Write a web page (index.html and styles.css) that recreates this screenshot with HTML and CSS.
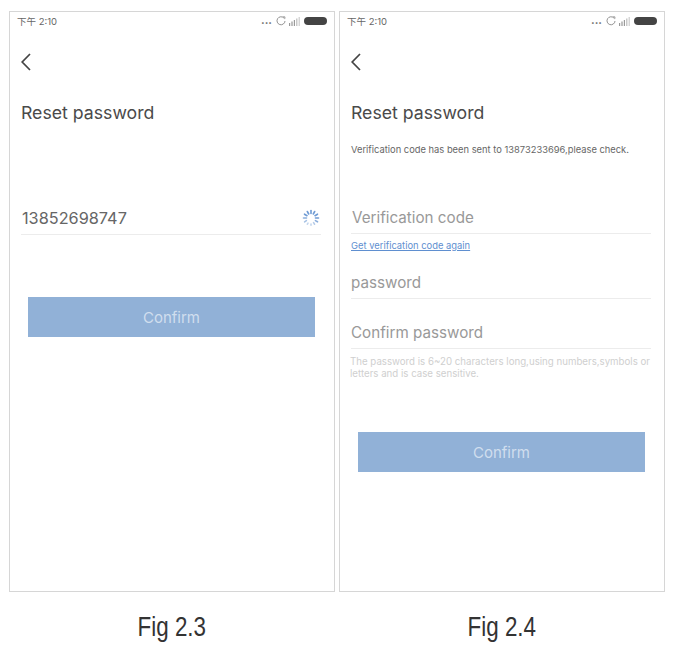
FILE: index.html
```html
<!DOCTYPE html>
<html lang="en">
<head>
<meta charset="utf-8">
<title>Reset password</title>
<link rel="stylesheet" href="styles.css">
</head>
<body>
<main class="figures">
  <figure class="figure">
    <section class="phone">
      <header class="status">
        <span class="time">下午 2:10</span>
        <span class="status-icons">
          <span class="dots">...</span>
          <svg class="sync" viewBox="0 0 10 10"><path d="M7.9 2A4 4 0 1 0 9 5" fill="none" stroke="#777" stroke-width="0.8"/><path d="M6.8 0.8 9 0.9 8.7 3.1" fill="none" stroke="#777" stroke-width="0.7"/></svg>
          <svg class="signal" viewBox="0 0 11 9"><g fill="#999"><rect x="0" y="6" width="1.2" height="3"/><rect x="2.4" y="4.5" width="1.2" height="4.5"/><rect x="4.8" y="3" width="1.2" height="6"/><rect x="7.2" y="1.5" width="1.2" height="7.5" fill="#bbb"/><rect x="9.6" y="0" width="1.2" height="9" fill="#ccc"/></g></svg>
          <span class="battery"></span>
        </span>
      </header>
      <svg class="back" viewBox="0 0 10 18"><path d="M9 1 1.2 9 9 17" fill="none" stroke="#444" stroke-width="1.7"/></svg>
      <h1 class="title">Reset password</h1>
      <div class="number-row">
        <span class="number">13852698747</span>
        <svg class="spinner" viewBox="0 0 18 18"><g stroke="#6f9bd4" stroke-width="1.6" stroke-linecap="round"><path d="M9 1.5V4.5"/><path d="M12.7 2.5 11.3 5"/><path d="M15.5 5.2 13 6.7"/><path d="M16.5 9H13.5"/><path d="M15.5 12.8 13.4 11.6" opacity=".8"/><path d="M12.5 15.2 11.6 13.6" opacity=".5"/><path d="M9 16.2V15" opacity=".4"/><path d="M5.4 15.2 6 14.2" opacity=".4"/><path d="M2.6 12.8 4.4 11.6" opacity=".6"/><path d="M1.5 9H4.5" opacity=".8"/><path d="M2.5 5.2 5 6.7"/><path d="M5.3 2.5 6.7 5"/></g></svg>
      </div>
      <button class="confirm confirm-first" type="button">Confirm</button>
    </section>
    <figcaption class="caption"><span class="caption-text">Fig 2.3</span></figcaption>
  </figure>

  <figure class="figure">
    <section class="phone">
      <header class="status">
        <span class="time">下午 2:10</span>
        <span class="status-icons">
          <span class="dots">...</span>
          <svg class="sync" viewBox="0 0 10 10"><path d="M7.9 2A4 4 0 1 0 9 5" fill="none" stroke="#777" stroke-width="0.8"/><path d="M6.8 0.8 9 0.9 8.7 3.1" fill="none" stroke="#777" stroke-width="0.7"/></svg>
          <svg class="signal" viewBox="0 0 11 9"><g fill="#999"><rect x="0" y="6" width="1.2" height="3"/><rect x="2.4" y="4.5" width="1.2" height="4.5"/><rect x="4.8" y="3" width="1.2" height="6"/><rect x="7.2" y="1.5" width="1.2" height="7.5" fill="#bbb"/><rect x="9.6" y="0" width="1.2" height="9" fill="#ccc"/></g></svg>
          <span class="battery"></span>
        </span>
      </header>
      <svg class="back" viewBox="0 0 10 18"><path d="M9 1 1.2 9 9 17" fill="none" stroke="#444" stroke-width="1.7"/></svg>
      <h1 class="title">Reset password</h1>
      <p class="sent">Verification code has been sent to 13873233696,please check.</p>
      <div class="field field-code">Verification code</div>
      <a class="again" href="#">Get verification code again</a>
      <div class="field field-password">password</div>
      <div class="field field-repeat">Confirm password</div>
      <p class="hint">The password is 6~20 characters long,using numbers,symbols or letters and is case sensitive.</p>
      <button class="confirm confirm-second" type="button">Confirm</button>
    </section>
    <figcaption class="caption"><span class="caption-text">Fig 2.4</span></figcaption>
  </figure>
</main>
</body>
</html>
```

FILE: styles.css
```css
* { box-sizing: border-box; }
html, body { margin: 0; padding: 0; background: #fff; }
body { font-family: Inter, "Liberation Sans", Arial, sans-serif; color: #555; }

.figures { display: flex; gap: 4px; padding: 11px 0 0 9px; }
.figure { margin: 0; width: 326px; }

.phone {
  height: 581px;
  border: 1px solid #d6d6d6;
  padding: 0 12px 0 11px;
  display: flex;
  flex-direction: column;
  align-items: flex-start;
}

.status { width: 100%; height: 18px; display: flex; justify-content: space-between; align-items: center; }
.time { margin-left: -4px; font-size: 9.5px; color: #666; font-family: Inter, "Noto Sans CJK SC", sans-serif; }
.status-icons { display: flex; align-items: center; gap: 3px; margin-right: -5px; }
.dots { font-size: 11px; font-weight: bold; line-height: 8px; color: #666; margin-right: 1px; position: relative; top: -1px; }
.sync { width: 10px; height: 10px; }
.signal { width: 11px; height: 9px; }
.battery { width: 23px; height: 8px; border-radius: 4px; background: #444; margin-left: 1px; }

.back { width: 10px; height: 18px; margin-top: 23px; }
.title { margin: 31px 0 0 0; font-size: 17.7px; line-height: 22px; font-weight: normal; color: #4a4a4a; }

.number-row { width: 300px; height: 34px; margin-top: 77px; padding-left: 1px; border-bottom: 1px solid #ececec; display: flex; justify-content: space-between; align-items: center; }
.number { font-size: 16.3px; color: #666; }
.spinner { width: 18px; height: 18px; margin-right: 1px; }

.confirm {
  width: 287px;
  height: 40px;
  border: 0;
  background: #91b1d7;
  color: #d0deee;
  font: 15px Inter, "Liberation Sans", Arial, sans-serif;
  padding: 0;
}
.confirm-first { margin: 62px 0 0 7px; }
.confirm-second { margin: 53px 0 0 7px; }

.sent { margin: 20px 0 0; font-size: 9.35px; line-height: 12px; color: #666; white-space: nowrap; }

.field { width: 300px; font-size: 15.2px; line-height: 20px; color: #999; border-bottom: 1px solid #ececec; padding-bottom: 5px; }
.field-code { margin-top: 52px; padding-left: 1px; }
.again { margin-top: 6px; font-size: 9.4px; line-height: 12px; color: #5f8fd0; }
.field-password { margin-top: 21px; }
.field-repeat { margin-top: 24px; }

.hint { margin: 7px 0 0 -1px; width: 304px; font-size: 9.7px; line-height: 11.5px; color: #cfcfcf; }

.caption { margin-top: 20px; text-align: center; font: 28px/30px "Liberation Sans", sans-serif; color: #333; }
.caption-text { display: inline-block; transform: scaleX(0.8); }
```
